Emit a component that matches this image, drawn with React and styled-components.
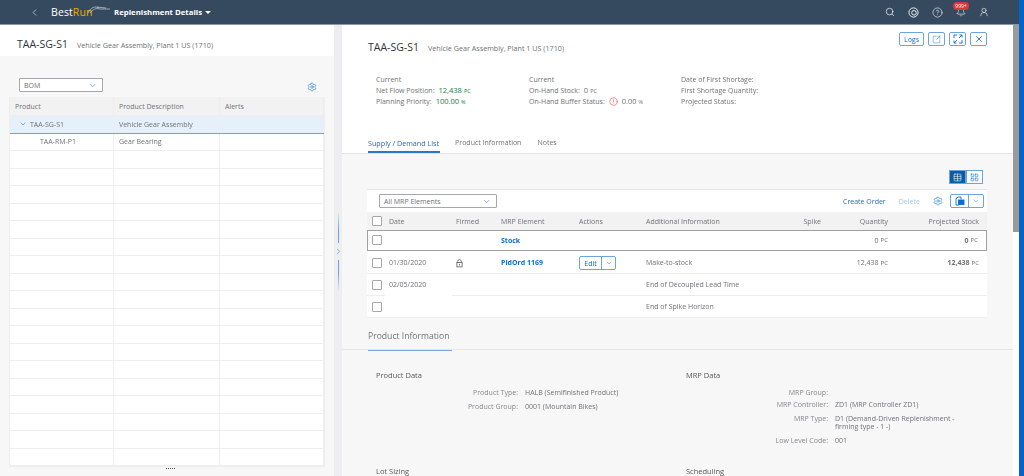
import React from 'react';
import styled, { createGlobalStyle } from 'styled-components';
import {
  ChevronLeft, ChevronDown, ChevronRight, Search, CircleHelp, Bell, UserRound, Settings, X,
  SquareArrowOutUpRight, CircleAlert, Table, LayoutGrid,
} from 'lucide-react';

const colors = {
  shell: '#354a5f',
  text: '#6f7275',
  dark: '#32363a',
  link: '#0a6ed1',
  border: '#eeeeee',
  canvas: '#f7f7f7',
  outline: '#6ea3dc',
};

const GlobalStyle = createGlobalStyle`
  html, body { margin: 0; padding: 0; background: #fff; }
  body { font-family: "Open Sans", "Liberation Sans", sans-serif; color: ${colors.text}; }
  * { box-sizing: border-box; }
`;

const Page = styled.div`
  width: 1024px;
  height: 476px;
  overflow: hidden;
  display: flex;
  font-size: 7px;
  filter: blur(0.3px);
`;

const Main = styled.div`
  width: 1019px;
  display: flex;
  flex-direction: column;
`;

const SideStrip = styled.div`
  width: 5px;
  background: #0064c8;
`;

/* shell bar */
const Shell = styled.header`
  height: 25px;
  flex: none;
  background: ${colors.shell};
  border-bottom: 1px solid #8a97a5;
  display: flex;
  align-items: center;
  padding: 0 30px 0 29px;
  color: #fff;
`;

const Logo = styled.div`
  display: flex;
  align-items: center;
  margin-left: 11px;
  width: 63px;
  font-size: 10.5px;
  letter-spacing: 0.1px;
  color: #fff;
  svg { margin: -6px 0 0 -6px; }
`;

const LogoRun = styled.span`
  color: #f0ab00;
`;

const ShellTitle = styled.div`
  font-size: 7.8px;
  font-weight: 700;
  color: #fff;
`;

const Caret = styled.span`
  width: 0;
  height: 0;
  margin-left: 3px;
  border-left: 3px solid transparent;
  border-right: 3px solid transparent;
  border-top: 3px solid #fff;
`;

const ShellIcons = styled.div`
  margin-left: auto;
  display: flex;
  align-items: center;
  gap: 13px;
`;

const BellWrap = styled.div`
  position: relative;
  width: 10px;
  height: 10px;
  display: flex;
`;

const Badge = styled.span`
  position: absolute;
  top: -5px;
  left: -3px;
  width: 16px;
  height: 8px;
  border-radius: 4px;
  background: #d9363e;
  color: #fff;
  font-size: 5px;
  line-height: 8px;
  text-align: center;
`;

/* panels */
const Body = styled.div`
  flex: 1;
  min-height: 0;
  display: flex;
`;

const LeftPanel = styled.section`
  width: 334px;
  flex: none;
  background: ${colors.canvas};
  display: flex;
  flex-direction: column;
`;

const PanelHead = styled.div`
  height: 31px;
  background: #fff;
  display: flex;
  align-items: baseline;
  gap: 9px;
  padding: 12px 0 0 17px;
`;

const PageTitle = styled.h1`
  margin: 0;
  font-size: 10.5px;
  font-weight: 400;
  color: ${colors.dark};
`;

const PageSub = styled.span`
  font-size: 7.2px;
  color: ${colors.text};
`;

const LeftTools = styled.div`
  height: 41px;
  flex: none;
  display: flex;
  align-items: flex-end;
  justify-content: space-between;
  padding: 0 17px 5px 19px;
  color: ${colors.link};
`;

const Select = styled.div`
  width: ${(p) => p.$w}px;
  height: 14px;
  flex: none;
  background: #fff;
  border: 1px solid #a5a8ab;
  border-radius: 1px;
  display: flex;
  align-items: center;
  justify-content: space-between;
  padding: 0 5px 0 4px;
  color: ${colors.text};
  svg { color: ${colors.link}; }
`;

const TreeTable = styled.div`
  margin-left: 9px;
  width: 316px;
  background: #fff;
  border: 1px solid ${colors.border};
  border-top: 0;
`;

const TreeRow = styled.div`
  display: grid;
  grid-template-columns: 104px 106px 1fr;
  height: ${(p) => (p.$head ? 19 : 17.5)}px;
  background: ${(p) => (p.$head ? '#f2f2f2' : p.$selected ? '#e5f0fa' : '#fff')};
  border-bottom: 1px solid ${(p) => (p.$selected ? '#6ea3dc' : colors.border)};
`;

const TreeCell = styled.div`
  display: flex;
  align-items: center;
  gap: 3px;
  padding-left: ${(p) => p.$indent || 5}px;
  border-right: 1px solid ${colors.border};
  white-space: nowrap;
  svg { color: ${colors.link}; }
`;

const SashDots = styled.div`
  width: 9px;
  margin: 1px 0 0 166px;
  border-top: 1px dotted #555;
`;

const Splitter = styled.div`
  width: 8px;
  flex: none;
  background: #eeeef0;
  display: flex;
  flex-direction: column;
  align-items: center;
  padding-top: 186px;
  color: #5b97d6;
`;

const SashLine = styled.span`
  width: 1px;
  height: 32px;
  background: linear-gradient(${(p) => (p.$down ? 'to top' : 'to bottom')}, transparent, #6ea3dc 60%);
`;

const SashIcon = styled.span`
  height: 17px;
  display: flex;
  align-items: center;
`;

const RightPanel = styled.section`
  flex: 1;
  min-width: 0;
  overflow: hidden;
  background: ${colors.canvas};
`;

const DetailHead = styled.div`
  height: 129px;
  background: #fff;
  border-bottom: 1px solid #e5e5e5;
  padding: 7px 26px 0;
  display: flex;
  flex-direction: column;
`;

const DetailTop = styled.div`
  display: flex;
  align-items: flex-start;
  justify-content: space-between;
`;

const TitleLine = styled.div`
  display: flex;
  align-items: baseline;
  gap: 9px;
  padding-top: 8px;
`;

const HeadButtons = styled.div`
  display: flex;
  gap: 4px;
`;

const Button = styled.button`
  height: 14px;
  min-width: 17px;
  padding: 0 ${(p) => (p.$text ? 4 : 0)}px;
  background: #fff;
  border: 1px solid ${colors.outline};
  border-radius: 2px;
  color: ${colors.link};
  font: inherit;
  font-size: 7px;
  display: flex;
  align-items: center;
  justify-content: center;
`;

const Kpis = styled.div`
  display: grid;
  grid-template-columns: 153px 152px 1fr;
  padding: 20px 0 0 8px;
  line-height: 11px;
`;

const KpiLine = styled.div`
  display: flex;
  align-items: center;
  gap: 4px;
  height: 11px;
`;

const KpiValue = styled.span`
  color: ${(p) => (p.$good ? '#107e3e' : colors.text)};
  font-size: 7.5px;
  small { font-size: 5.5px; margin-left: 2px; }
`;

const Tabs = styled.div`
  margin-top: auto;
  display: flex;
  gap: 15px;
`;

const Tab = styled.div`
  height: 18px;
  padding: 3px 1px 0 0;
  font-size: ${(p) => (p.$active ? 7.2 : 7)}px;
  color: ${(p) => (p.$active ? '#2a6fb5' : colors.text)};
  border-bottom: 2px solid ${(p) => (p.$active ? '#2a78c8' : 'transparent')};
`;

const ListArea = styled.div`
  padding: 16px 26px 0 25px;
`;

const ViewToggle = styled.div`
  display: flex;
  justify-content: flex-end;
  padding-right: 4px;
  height: 19px;
`;

const ToggleButton = styled.span`
  width: 17px;
  height: 14px;
  display: flex;
  align-items: center;
  justify-content: center;
  border: 1px solid ${colors.outline};
  background: ${(p) => (p.$on ? '#0a5ba8' : '#fff')};
  color: ${(p) => (p.$on ? '#fff' : colors.link)};
`;

const ListCard = styled.div`
  background: #fff;
  border-top: 1px solid #e5e5e5;
`;

const ListTools = styled.div`
  height: 22px;
  display: flex;
  align-items: center;
  padding: 0 4px 0 12px;
`;

const ToolLink = styled.span`
  margin-left: ${(p) => p.$gap}px;
  white-space: nowrap;
  color: ${(p) => (p.$off ? '#a8c8ea' : '#2a6fb5')};
`;

const GearButton = styled.span`
  margin: 0 7px 0 13px;
  display: flex;
  color: ${colors.link};
`;

const SplitButton = styled.div`
  display: flex;
  height: 14px;
  flex: none;
  border: 1px solid ${colors.outline};
  border-radius: 2px;
  color: ${colors.link};
  background: #fff;
`;

const SplitPart = styled.span`
  width: ${(p) => p.$w}px;
  display: flex;
  align-items: center;
  justify-content: center;
  border-left: ${(p) => (p.$divider ? `1px solid ${colors.outline}` : '0')};
  font-size: 7px;
`;

const gridCols = '67px 49px 78px 67px 144px 31px 67px 1fr';

const ListHead = styled.div`
  display: grid;
  grid-template-columns: 18px ${gridCols};
  height: 18px;
  background: #f2f2f2;
  align-items: center;
`;

const ListRow = styled.div`
  display: grid;
  grid-template-columns: ${(p) => (p.$outlined ? 17 : 18)}px ${gridCols};
  height: ${(p) => (p.$outlined ? 21 : 22)}px;
  margin-bottom: ${(p) => (p.$outlined ? 1 : 0)}px;
  border: ${(p) => (p.$outlined ? '1px solid #a0a0a0' : '0')};
`;

const Cell = styled.div`
  display: flex;
  align-items: center;
  justify-content: ${(p) => (p.$right ? 'flex-end' : 'flex-start')};
  padding-left: ${(p) => (p.$pad ? 4 : 0)}px;
  padding-right: ${(p) => (p.$last ? 8 : 0)}px;
  white-space: nowrap;
  border-bottom: 1px solid ${(p) => (p.$plain ? 'transparent' : colors.border)};
  font-weight: ${(p) => (p.$bold ? 700 : 400)};
  small { font-size: 6px; font-weight: 400; margin-left: 2px; }
`;

const HeadCell = styled(Cell)`
  border-bottom: 0;
`;

const Box = styled.span`
  display: block;
  width: 10px;
  height: 10px;
  margin-left: ${(p) => (p.$outlined ? 4 : 5)}px;
  background: #fff;
  border: 1px solid #a5a8ab;
  border-radius: 1px;
`;

const RowLink = styled.a`
  color: ${colors.link};
  font-weight: 700;
`;

const EditGroup = styled(SplitButton)`
  margin-top: 1px;
`;

const InfoHead = styled.div`
  height: 32px;
  margin: 0 -26px 0 -25px;
  padding-left: 26px;
  border-bottom: 1px solid #e5e5e5;
  display: flex;
`;

const InfoTitle = styled.h2`
  margin: 0;
  padding: 12px 1px 0 0;
  width: 84px;
  height: 33px;
  font-size: 8.6px;
  font-weight: 400;
  white-space: nowrap;
  color: ${colors.text};
  border-bottom: 1px solid #7aa7d6;
`;

const InfoGrid = styled.div`
  display: grid;
  grid-template-columns: 310px 1fr;
  padding-left: 9px;
`;

const InfoGroup = styled.div`
  display: flex;
  flex-direction: column;
`;

const GroupTitle = styled.h3`
  margin: 0;
  padding-top: 21px;
  height: 39px;
  font-size: 7.5px;
  line-height: 8px;
  font-weight: 400;
  color: #55585b;
`;

const Field = styled.div`
  display: grid;
  grid-template-columns: 142px 125px;
  column-gap: 7px;
  padding-bottom: ${(p) => p.$gap}px;
  line-height: 8px;
`;

const FieldLabel = styled.span`
  text-align: right;
  color: #85888b;
`;

const GroupTail = styled(GroupTitle)`
  padding-top: 0;
  height: 8px;
  margin-top: ${(p) => p.$top}px;
`;

const Scrollbar = styled.div`
  width: 6px;
  flex: none;
  background: #fff;
`;

const Thumb = styled.div`
  height: 207px;
  background: #9a9a9a;
`;

const emptyRows = Array.from({ length: 18 }, (_, i) => i);

const Swoosh = () => (
  <svg width="24" height="9" viewBox="0 0 24 9" fill="none" stroke="#dfe4ea" strokeWidth="0.6">
    <path d="M1 8C4 2 8 1 12 3" />
    <path d="M3 8C6 4 9 3 13 4L23 4" />
    <path d="M10 2L19 3" />
  </svg>
);

const CopilotIcon = () => (
  <svg width="11" height="11" viewBox="0 0 11 11" fill="none" stroke="#fff" strokeWidth="0.9">
    <circle cx="5.5" cy="5.5" r="4.6" />
    <circle cx="6" cy="5.8" r="2.3" />
  </svg>
);

const ExpandIcon = () => (
  <svg width="10" height="10" viewBox="0 0 10 10" fill="none" stroke="currentColor" strokeWidth="0.9">
    <path d="M6.5 1H9V3.5M9 1L6 4M3.5 9H1V6.5M1 9L4 6M1 4V1H4M6 9H9V6" />
  </svg>
);

const ExportIcon = () => (
  <svg width="11" height="10" viewBox="0 0 11 10" fill="none" stroke="currentColor" strokeWidth="0.9">
    <path d="M2 9V2.5L4 1H7V3.5M2 9H5" />
    <rect x="4.5" y="4" width="5.5" height="4.5" fill="currentColor" />
  </svg>
);

const FirmedLock = () => (
  <svg width="7" height="10" viewBox="0 0 8 10" fill="none" stroke="#55585b" strokeWidth="0.9">
    <path d="M2 4.5V2.8C2 .6 6 .6 6 2.8V4.5" />
    <rect x="1" y="4.5" width="6" height="5" />
    <path d="M4 6V8" />
  </svg>
);

const App = () => (
  <Page>
    <GlobalStyle />
    <Main>
      <Shell>
        <ChevronLeft size={11} strokeWidth={1.5} color="#cfe2f7" />
        <Logo>
          Best<LogoRun>Run</LogoRun>
          <Swoosh />
        </Logo>
        <ShellTitle>Replenishment Details</ShellTitle>
        <Caret />
        <ShellIcons>
          <Search size={10} strokeWidth={1.6} />
          <CopilotIcon />
          <CircleHelp size={11} strokeWidth={1.3} />
          <BellWrap>
            <Bell size={10} strokeWidth={1.4} />
            <Badge>999+</Badge>
          </BellWrap>
          <UserRound size={10} strokeWidth={1.4} />
        </ShellIcons>
      </Shell>

      <Body>
        <LeftPanel>
          <PanelHead>
            <PageTitle>TAA-SG-S1</PageTitle>
            <PageSub>Vehicle Gear Assembly, Plant 1 US (1710)</PageSub>
          </PanelHead>
          <LeftTools>
            <Select $w={84}>
              BOM
              <ChevronDown size={9} strokeWidth={1.3} />
            </Select>
            <Settings size={10} strokeWidth={1.3} />
          </LeftTools>
          <TreeTable>
            <TreeRow $head>
              <TreeCell>Product</TreeCell>
              <TreeCell>Product Description</TreeCell>
              <TreeCell>Alerts</TreeCell>
            </TreeRow>
            <TreeRow $selected>
              <TreeCell $indent={9}>
                <ChevronDown size={8} strokeWidth={1.5} />
                TAA-SG-S1
              </TreeCell>
              <TreeCell>Vehicle Gear Assembly</TreeCell>
              <TreeCell />
            </TreeRow>
            <TreeRow>
              <TreeCell $indent={30}>TAA-RM-P1</TreeCell>
              <TreeCell>Gear Bearing</TreeCell>
              <TreeCell />
            </TreeRow>
            {emptyRows.map((row) => (
              <TreeRow key={row}>
                <TreeCell />
                <TreeCell />
                <TreeCell />
              </TreeRow>
            ))}
          </TreeTable>
          <SashDots />
        </LeftPanel>

        <Splitter>
          <SashLine />
          <SashIcon>
            <ChevronRight size={9} strokeWidth={1.8} />
          </SashIcon>
          <SashLine $down />
        </Splitter>

        <RightPanel>
          <DetailHead>
            <DetailTop>
              <TitleLine>
                <PageTitle>TAA-SG-S1</PageTitle>
                <PageSub>Vehicle Gear Assembly, Plant 1 US (1710)</PageSub>
              </TitleLine>
              <HeadButtons>
                <Button $text>Logs</Button>
                <Button><SquareArrowOutUpRight size={9} strokeWidth={1.2} /></Button>
                <Button><ExpandIcon /></Button>
                <Button><X size={10} strokeWidth={2} /></Button>
              </HeadButtons>
            </DetailTop>
            <Kpis>
              <div>
                <KpiLine>Current</KpiLine>
                <KpiLine>Net Flow Position: <KpiValue $good>12,438<small>PC</small></KpiValue></KpiLine>
                <KpiLine>Planning Priority: <KpiValue $good>100.00<small>%</small></KpiValue></KpiLine>
              </div>
              <div>
                <KpiLine>Current</KpiLine>
                <KpiLine>On-Hand Stock: <KpiValue>0<small>PC</small></KpiValue></KpiLine>
                <KpiLine>
                  On-Hand Buffer Status:
                  <CircleAlert size={9} strokeWidth={1.4} color="#d9363e" />
                  <KpiValue>0.00<small>%</small></KpiValue>
                </KpiLine>
              </div>
              <div>
                <KpiLine>Date of First Shortage:</KpiLine>
                <KpiLine>First Shortage Quantity:</KpiLine>
                <KpiLine>Projected Status:</KpiLine>
              </div>
            </Kpis>
            <Tabs>
              <Tab $active>Supply / Demand List</Tab>
              <Tab>Product Information</Tab>
              <Tab>Notes</Tab>
            </Tabs>
          </DetailHead>

          <ListArea>
            <ViewToggle>
              <ToggleButton $on><Table size={9} strokeWidth={1.5} /></ToggleButton>
              <ToggleButton><LayoutGrid size={9} strokeWidth={1.5} /></ToggleButton>
            </ViewToggle>
            <ListCard>
              <ListTools>
                <Select $w={118}>
                  All MRP Elements
                  <ChevronDown size={9} strokeWidth={1.3} />
                </Select>
                <ToolLink $gap={346}>Create Order</ToolLink>
                <ToolLink $off $gap={13}>Delete</ToolLink>
                <GearButton><Settings size={10} strokeWidth={1.3} /></GearButton>
                <SplitButton>
                  <SplitPart $w={17}><ExportIcon /></SplitPart>
                  <SplitPart $w={15} $divider><ChevronDown size={8} strokeWidth={1.3} /></SplitPart>
                </SplitButton>
              </ListTools>
              <ListHead>
                <HeadCell><Box /></HeadCell>
                <HeadCell $pad>Date</HeadCell>
                <HeadCell $pad>Firmed</HeadCell>
                <HeadCell>MRP Element</HeadCell>
                <HeadCell>Actions</HeadCell>
                <HeadCell>Additional Information</HeadCell>
                <HeadCell $right>Spike</HeadCell>
                <HeadCell $right>Quantity</HeadCell>
                <HeadCell $right $last>Projected Stock</HeadCell>
              </ListHead>
              <ListRow $outlined>
                <Cell $plain><Box $outlined /></Cell>
                <Cell $plain />
                <Cell $plain />
                <Cell $plain><RowLink>Stock</RowLink></Cell>
                <Cell $plain />
                <Cell $plain />
                <Cell $plain />
                <Cell $plain $right>0<small>PC</small></Cell>
                <Cell $plain $right $last $bold>0<small>PC</small></Cell>
              </ListRow>
              <ListRow>
                <Cell><Box /></Cell>
                <Cell $pad>01/30/2020</Cell>
                <Cell $pad><FirmedLock /></Cell>
                <Cell><RowLink>PldOrd 1169</RowLink></Cell>
                <Cell>
                  <EditGroup>
                    <SplitPart $w={21}>Edit</SplitPart>
                    <SplitPart $w={14} $divider><ChevronDown size={8} strokeWidth={1.3} /></SplitPart>
                  </EditGroup>
                </Cell>
                <Cell>Make-to-stock</Cell>
                <Cell />
                <Cell $right>12,438<small>PC</small></Cell>
                <Cell $right $last $bold>12,438<small>PC</small></Cell>
              </ListRow>
              <ListRow>
                <Cell><Box /></Cell>
                <Cell $pad $plain>02/05/2020</Cell>
                <Cell />
                <Cell />
                <Cell />
                <Cell>End of Decoupled Lead Time</Cell>
                <Cell />
                <Cell />
                <Cell />
              </ListRow>
              <ListRow>
                <Cell><Box /></Cell>
                <Cell />
                <Cell />
                <Cell />
                <Cell />
                <Cell>End of Spike Horizon</Cell>
                <Cell />
                <Cell />
                <Cell />
              </ListRow>
            </ListCard>

            <InfoHead>
              <InfoTitle>Product Information</InfoTitle>
            </InfoHead>
            <InfoGrid>
              <InfoGroup>
                <GroupTitle>Product Data</GroupTitle>
                <Field $gap={6}>
                  <FieldLabel>Product Type:</FieldLabel>
                  <span>HALB (Semifinished Product)</span>
                </Field>
                <Field $gap={6}>
                  <FieldLabel>Product Group:</FieldLabel>
                  <span>0001 (Mountain Bikes)</span>
                </Field>
                <GroupTail $top={50}>Lot Sizing</GroupTail>
              </InfoGroup>
              <InfoGroup>
                <GroupTitle>MRP Data</GroupTitle>
                <Field $gap={4}>
                  <FieldLabel>MRP Group:</FieldLabel>
                  <span />
                </Field>
                <Field $gap={6}>
                  <FieldLabel>MRP Controller:</FieldLabel>
                  <span>ZD1 (MRP Controller ZD1)</span>
                </Field>
                <Field $gap={6}>
                  <FieldLabel>MRP Type:</FieldLabel>
                  <span>D1 (Demand-Driven Replenishment - firming type - 1 -)</span>
                </Field>
                <Field $gap={0}>
                  <FieldLabel>Low Level Code:</FieldLabel>
                  <span>001</span>
                </Field>
                <GroupTail $top={22}>Scheduling</GroupTail>
              </InfoGroup>
            </InfoGrid>
          </ListArea>
        </RightPanel>

        <Scrollbar>
          <Thumb />
        </Scrollbar>
      </Body>
    </Main>
    <SideStrip />
  </Page>
);

export default App;
